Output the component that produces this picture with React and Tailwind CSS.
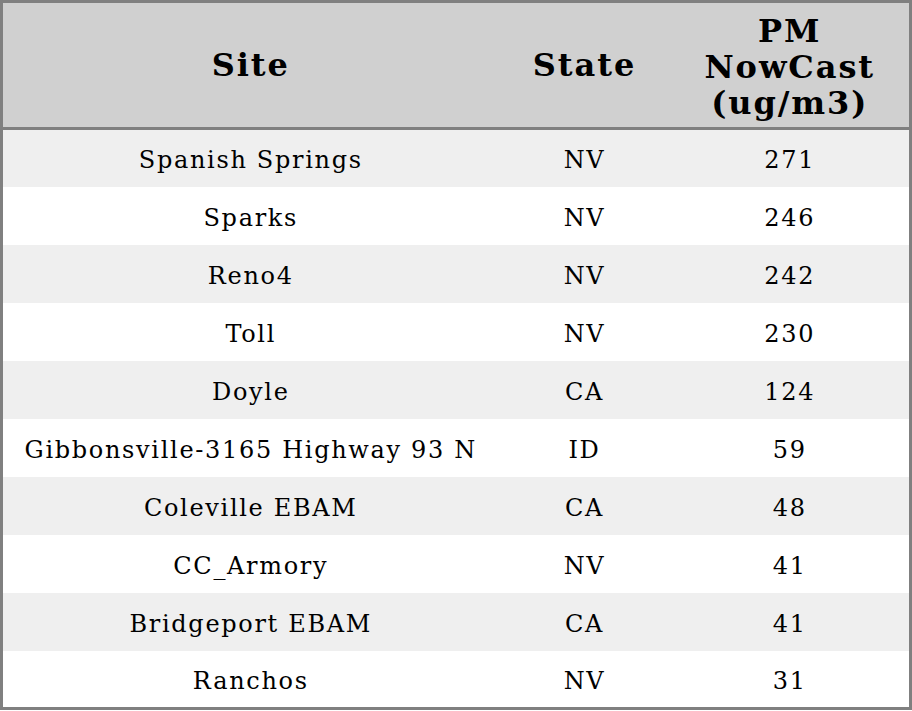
import React from 'react';

const rows = [
  ['Spanish Springs', 'NV', 271],
  ['Sparks', 'NV', 246],
  ['Reno4', 'NV', 242],
  ['Toll', 'NV', 230],
  ['Doyle', 'CA', 124],
  ['Gibbonsville-3165 Highway 93 N', 'ID', 59],
  ['Coleville EBAM', 'CA', 48],
  ['CC_Armory', 'NV', 41],
  ['Bridgeport EBAM', 'CA', 41],
  ['Ranchos', 'NV', 31],
];

const App = () => {
  return (
    <div className="w-[912px] h-[711px] bg-white font-['DejaVu_Serif',serif] text-black">
      <table className="w-[912px] table-fixed border-collapse border-[3px] border-[#808080]">
        <colgroup>
          <col className="w-[497px]" />
          <col className="w-[172px]" />
          <col className="w-[240px]" />
        </colgroup>
        <thead>
          <tr className="bg-[#d0d0d0] h-[127px] border-b-[3px] border-[#808080]">
            <th className="text-[32px] font-bold leading-[36px] tracking-[0.06em] text-center">Site</th>
            <th className="text-[32px] font-bold leading-[36px] tracking-[0.06em] text-center">State</th>
            <th className="text-[32px] font-bold leading-[36px] tracking-[0.06em] text-center pt-[3px]">
              PM
              <br />
              NowCast
              <br />
              (ug/m3)
            </th>
          </tr>
        </thead>
        <tbody>
          {rows.map(([site, state, pm], i) => (
            <tr key={site} className={i % 2 === 0 ? 'bg-[#efefef] h-[58px]' : 'bg-white h-[58px]'}>
              <td className="text-[24px] tracking-[0.07em] text-center whitespace-nowrap pt-[4px]">{site}</td>
              <td className="text-[24px] tracking-[0.07em] text-center pt-[4px]">{state}</td>
              <td className="text-[24px] tracking-[0.07em] text-center pt-[4px]">{pm}</td>
            </tr>
          ))}
        </tbody>
      </table>
    </div>
  );
};

export default App;
